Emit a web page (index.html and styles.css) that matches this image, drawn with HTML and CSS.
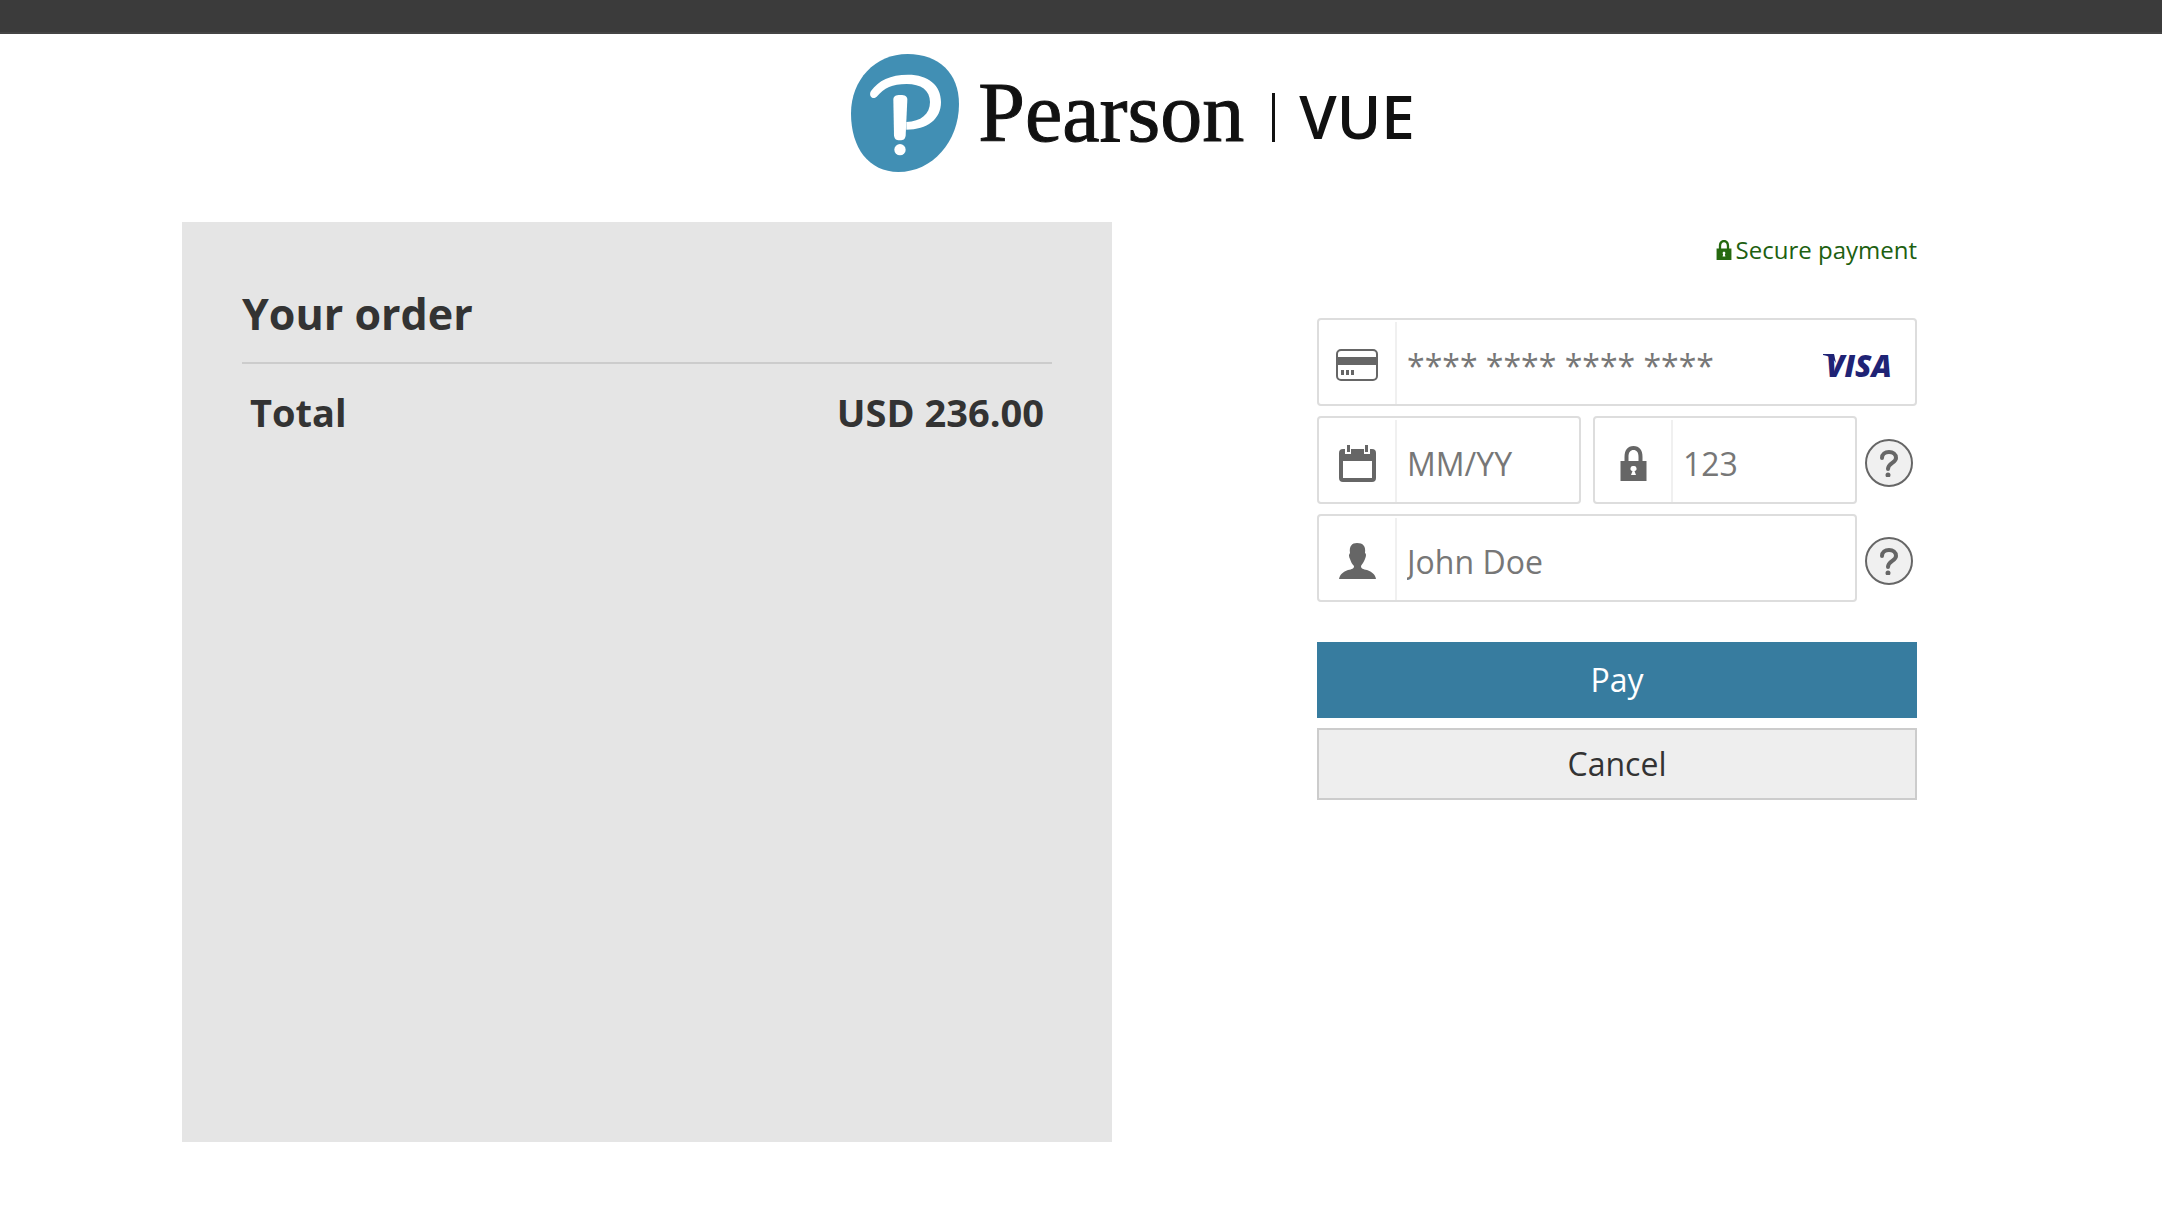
FILE: index.html
```html
<!DOCTYPE html>
<html lang="en">
<head>
  <meta charset="UTF-8" />
  <meta name="viewport" content="width=device-width, initial-scale=1.0" />
  <title>Payment - Pearson VUE</title>
  <link rel="stylesheet" href="styles.css">
</head>
<body>
  <div class="top-bar"></div>

  <header class="header">
    <svg class="logo-mark" viewBox="36 102 324 354" aria-hidden="true">
      <path fill="#418fb4" d="M206 102C300 102 360 160 360 252C360 365 280 456 178 456C90 456 36 385 36 280C36 180 108 102 206 102Z"/>
      <path fill="#fff" d="M96 213C118 182 154 164 207 164C268 164 306 196 306 246C306 298 265 329 202 329L202 306C246 304 273 283 273 246C273 211 246 192 203 192C159 192 136 204 113 230C102 241 87 228 96 213Z"/>
      <path fill="#fff" d="M163 239C163 229 170 225 184 225C198 225 205 229 205 239L200 346C199 357 194 361 182 361C171 361 166 357 165 346Z"/>
      <circle cx="183" cy="389" r="17" fill="#fff"/>
    </svg>
    <span class="logo-name">Pearson</span>
    <span class="logo-divider"></span>
    <span class="logo-vue">VUE</span>
  </header>

  <main class="container">
    <section class="order">
      <h1>Your order</h1>
      <div class="total">
        <span>Total</span>
        <span>USD 236.00</span>
      </div>
    </section>

    <form class="payment">
      <p class="secure">
        <svg class="secure-icon" viewBox="0 0 26 35" aria-hidden="true">
          <path d="M0 15H4V11C4 4 7 0 13 0S22 4 22 11V15H26V35H0ZM8 15H18V11C18 6 16 4 13 4S8 6 8 11ZM13 20A3 3 0 0 0 11.500 25L10.500 29H15.500L14.500 25A3 3 0 0 0 13 20Z" fill-rule="evenodd"/>
        </svg>
        Secure payment
      </p>

      <div class="row">
        <div class="field">
          <label for="cardNumber" aria-label="Card number">
            <svg width="42" height="32" viewBox="0 0 42 32">
              <rect x="1" y="1" width="40" height="30" rx="4" fill="none" stroke="#666" stroke-width="2"/>
              <path d="M1 8H41V16H1ZM5 21H8V26H5ZM10 21H13V26H10ZM15 21H18V26H15Z"/>
            </svg>
          </label>
          <input type="text" id="cardNumber" placeholder="**** **** **** ****">
          <svg class="visa" width="80" height="44" viewBox="0 -8 80 44" role="img" aria-label="VISA">
            <path d="M0 2H11L13 11C10 6 6 4 0 3Z"/>
            <text x="3" y="25">VISA</text>
          </svg>
        </div>
      </div>

      <div class="row">
        <div class="field">
          <label for="expiry" aria-label="Expiry date">
            <svg width="37" height="37" viewBox="0 0 37 37">
              <path d="M4 4H6V9H12V4H25V9H31V4H33Q37 4 37 8V33Q37 37 33 37H4Q0 37 0 33V8Q0 4 4 4ZM4 16V33H33V16Z" fill-rule="evenodd"/>
              <path d="M8 0H11V7H8ZM26 0H29V7H26Z"/>
            </svg>
          </label>
          <input type="text" id="expiry" placeholder="MM/YY">
        </div>
        <div class="field">
          <label for="cvc" aria-label="Security code">
            <svg width="27" height="35" viewBox="0 0 26 35">
              <path d="M0 15H4V11C4 4 7 0 13 0S22 4 22 11V15H26V35H0ZM8 15H18V11C18 6 16 4 13 4S8 6 8 11ZM13 20A2.500 2.500 0 0 0 12 25L10.500 29H15.500L14 25A2.500 2.500 0 0 0 13 20Z" fill-rule="evenodd"/>
            </svg>
          </label>
          <input type="text" id="cvc" placeholder="123">
        </div>
        <button type="button" class="help" aria-label="Security code help">
          <svg width="18" height="27" viewBox="0 0 18 27">
            <path class="hook" d="M2 8C2 4 5 2 9 2S16 4 16 8C16 13 8 13 8 19"/>
            <circle cx="8" cy="25" r="2.500"/>
          </svg>
        </button>
      </div>

      <div class="row">
        <div class="field">
          <label for="holder" aria-label="Cardholder name">
            <svg width="37" height="36" viewBox="0 0 37 36">
              <path d="M18 0C24 0 27 3 26 10Q28 11 26 16C25 19 23 21 22 23C22 26 24 26 28 27C33 29 36 31 37 36H0C1 31 4 29 9 27C13 26 15 26 15 23C13 21 12 19 11 16Q9 12 11 10C10 3 13 0 18 0Z"/>
            </svg>
          </label>
          <input type="text" id="holder" placeholder="John Doe">
        </div>
        <button type="button" class="help" aria-label="Cardholder name help">
          <svg width="18" height="27" viewBox="0 0 18 27">
            <path class="hook" d="M2 8C2 4 5 2 9 2S16 4 16 8C16 13 8 13 8 19"/>
            <circle cx="8" cy="25" r="2.500"/>
          </svg>
        </button>
      </div>

      <div class="buttons">
        <button type="submit" class="button">Pay</button>
        <button type="button" class="button secondary">Cancel</button>
      </div>
    </form>
  </main>
</body>
</html>
```

FILE: styles.css
```css
* {
  box-sizing: border-box;
}

body {
  margin: 0;
  font-family: 'Open Sans', 'Noto Sans', sans-serif;
  background-color: #fff;
  color: #333;
}

.top-bar {
  height: 34px;
  background-color: #3b3b3b;
  border-bottom: 2px solid #444;
}

.header {
  display: flex;
  align-items: center;
  justify-content: center;
  height: 188px;
  padding: 0 0 30px 104px;
  color: #111;
}

.logo-mark {
  width: 108px;
  height: 118px;
  margin-right: 19px;
}

.logo-name {
  font-family: 'Liberation Serif', serif;
  font-size: 84px;
  line-height: 96px;
  -webkit-text-stroke: 1px #111;
}

.logo-divider {
  width: 3px;
  height: 49px;
  margin: 8px 24px 0 28px;
  background-color: #111;
}

.logo-vue {
  padding-top: 6px;
  font-size: 60px;
  font-weight: 600;
  line-height: 80px;
}

.container {
  display: grid;
  grid-template-columns: minmax(0, 31fr) minmax(0, 20fr);
  gap: 205px;
  padding: 0 245px 72px 182px;
}

.order {
  min-height: 920px;
  padding: 60px;
  background-color: #e5e5e5;
}

.order h1 {
  margin: 0;
  padding-bottom: 16px;
  border-bottom: 2px solid #ccc;
  font-size: 43px;
  font-weight: bold;
  line-height: 64px;
}

.total {
  display: flex;
  justify-content: space-between;
  padding: 20px 8px;
  font-size: 38px;
  font-weight: bold;
  line-height: 56px;
}

.payment {
  padding-top: 12px;
}

.secure {
  display: flex;
  align-items: center;
  justify-content: flex-end;
  gap: 4px;
  margin: 0 0 52px;
  color: #206010;
  font-size: 24px;
  line-height: 32px;
}

.secure-icon {
  width: 16px;
  height: 20px;
  fill: #26690f;
}

.row {
  display: flex;
  align-items: center;
  gap: 12px;
  margin-bottom: 10px;
}

.field {
  display: flex;
  flex: 1;
  align-items: center;
  min-width: 0;
  height: 88px;
  padding-top: 2px;
  border: 2px solid #ddd;
  border-radius: 4px;
}

.field label {
  display: flex;
  flex: none;
  align-items: center;
  justify-content: center;
  width: 78px;
  height: 100%;
  padding-top: 4px;
  border-right: 2px solid #f0f0f0;
}

.field svg {
  fill: #666;
}

.field input {
  flex: 1;
  min-width: 0;
  height: 100%;
  padding: 4px 10px 0;
  border: none;
  outline: none;
  background: none;
  color: #333;
  font-family: inherit;
  font-size: 32px;
}

.field input::placeholder {
  color: #777;
}

.field .visa {
  flex: none;
  margin: 6px 12px 0 0;
  fill: #1f2375;
}

.visa text {
  font-size: 30px;
  font-style: italic;
  font-weight: 800;
}

.help {
  display: flex;
  flex: none;
  align-items: center;
  justify-content: center;
  width: 48px;
  height: 48px;
  margin: 6px 4px 0 -4px;
  padding: 0;
  border: 2px solid #666;
  border-radius: 50%;
  background-color: #f0f0f0;
  cursor: pointer;
}

.help svg {
  fill: #666;
}

.help .hook {
  fill: none;
  stroke: #666;
  stroke-width: 4;
  stroke-linecap: round;
}

.buttons {
  display: flex;
  flex-direction: column;
  gap: 10px;
  margin-top: 40px;
}

.button {
  height: 76px;
  padding: 0 0 2px;
  border: none;
  background-color: #377c9f;
  color: #fff;
  font-family: inherit;
  font-size: 32px;
  cursor: pointer;
}

.button.secondary {
  height: 72px;
  border: 2px solid #ccc;
  background-color: #eee;
  color: #333;
}
```
